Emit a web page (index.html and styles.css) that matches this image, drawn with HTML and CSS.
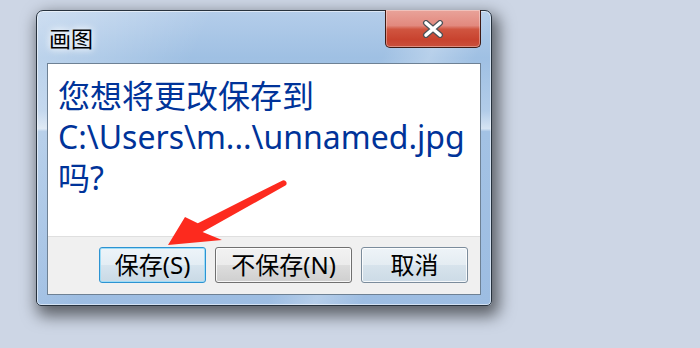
FILE: index.html
```html
<!DOCTYPE html>
<html lang="zh-CN">
<head>
<meta charset="utf-8">
<title>画图</title>
<link rel="stylesheet" href="styles.css">
</head>
<body>
<div class="window">
  <div class="titlebar">
    <span class="title">画图</span>
    <div class="close">
      <svg class="close-x" width="22" height="18" viewBox="0 0 22 18">
        <path d="M4 3 L18 15 M18 3 L4 15" stroke="#4b5258" stroke-width="6" stroke-linecap="round" fill="none"/>
        <path d="M4 3 L18 15 M18 3 L4 15" stroke="#ffffff" stroke-width="3.6" stroke-linecap="round" fill="none"/>
      </svg>
    </div>
  </div>
  <div class="client">
    <div class="message">您想将更改保存到<br>C:\Users\m...\unnamed.jpg<br>吗?</div>
    <div class="footer">
      <button class="btn btn-default">保存(S)</button>
      <button class="btn">不保存(N)</button>
      <button class="btn btn-hover">取消</button>
    </div>
  </div>
</div>
<svg class="arrow" width="700" height="348" viewBox="0 0 700 348">
  <path d="M282.6 180.4 L197.8 223.3 L185 217 L168 245 L222 240 L202.6 232.1 L285.4 185.6 A3 3 0 0 0 282.6 180.4 Z" fill="#fd2a1e"/>
</svg>
</body>
</html>
```

FILE: styles.css
```css
html, body {
  margin: 0;
  height: 100%;
}

body {
  background: #cdd6e5;
  padding: 10px 0 0 36px;
  box-sizing: border-box;
  position: relative;
  overflow: hidden;
  font-family: "Noto Sans", "Noto Sans CJK SC", sans-serif;
}

.window {
  width: 456px;
  height: 296px;
  box-sizing: border-box;
  border: 1px solid #27323e;
  border-radius: 7px 7px 5px 5px;
  padding: 0 10px 10px;
  display: flex;
  flex-direction: column;
  background:
    linear-gradient(115deg, rgba(255,255,255,0.35) 0%, rgba(255,255,255,0) 30%, rgba(255,255,255,0) 62%, rgba(255,255,255,0.25) 70%, rgba(255,255,255,0) 78%),
    linear-gradient(to bottom, #b4cdea 0%, #9fc0e3 16%, #b2cce9 34%, #d6e4f3 40%, #a3c2e4 41%, #9dbde2 100%);
  box-shadow: inset 0 0 0 1px rgba(255,255,255,0.55), 4px 7px 16px 3px rgba(0,0,0,0.55);
}

.titlebar {
  height: 52px;
  display: flex;
  align-items: flex-start;
  justify-content: space-between;
  flex: none;
}

.title {
  margin: 15px 0 0 2px;
  font-family: "Noto Sans CJK SC", sans-serif;
  font-size: 22px;
  line-height: 22px;
  color: #000;
  text-shadow: 0 0 6px #fff, 0 0 10px rgba(255,255,255,0.9);
}

.close {
  margin-top: -1px;
  width: 96px;
  height: 38px;
  box-sizing: border-box;
  border: 1px solid #3f1a14;
  border-top: none;
  border-radius: 0 0 5px 5px;
  background: linear-gradient(to bottom, #e9a39a 0%, #e2897e 42%, #d05540 52%, #c8432f 80%, #c9503c 100%);
  box-shadow: inset 0 0 0 1px rgba(255,255,255,0.35);
  display: flex;
  align-items: center;
  justify-content: center;
}

.close-x {
  display: block;
}

.client {
  flex: 1;
  border: 1px solid #6e8194;
  background: #fff;
  display: flex;
  flex-direction: column;
}

.message {
  flex: 1;
  padding: 11px 10px 0 10px;
  color: #003399;
  font-size: 32px;
  line-height: 41px;
}

.footer {
  flex: none;
  height: 47px;
  border-top: 1px solid #dfdfdf;
  background: #f0f0f0;
  display: flex;
  justify-content: flex-end;
  align-items: flex-start;
  gap: 9px;
  padding: 10px 12px 0 0;
  box-sizing: content-box;
}

.btn {
  height: 36px;
  min-width: 107px;
  padding: 0 15px;
  box-sizing: border-box;
  border: 1px solid #707070;
  border-radius: 3px;
  background: linear-gradient(to bottom, #f2f2f2 0%, #ebebeb 50%, #dddddd 51%, #cfcfcf 100%);
  box-shadow: inset 0 0 0 1px rgba(255,255,255,0.8);
  font-family: "Noto Sans", "Noto Sans CJK SC", sans-serif;
  font-size: 24px;
  line-height: 34px;
  color: #000;
}

.btn-default {
  border-color: #2c93d2;
  background: linear-gradient(to bottom, #edf4f9 0%, #e3edf4 50%, #d6e4ee 51%, #c9d9e5 100%);
  box-shadow: inset 0 0 0 1px #9fdcf6;
}

.btn-hover {
  border-color: #7b8c9c;
  background: linear-gradient(to bottom, #eef4f8 0%, #e4ecf2 50%, #d7e3ec 51%, #ccdbe6 100%);
}

.arrow {
  position: absolute;
  left: 0;
  top: 0;
  pointer-events: none;
}
```
